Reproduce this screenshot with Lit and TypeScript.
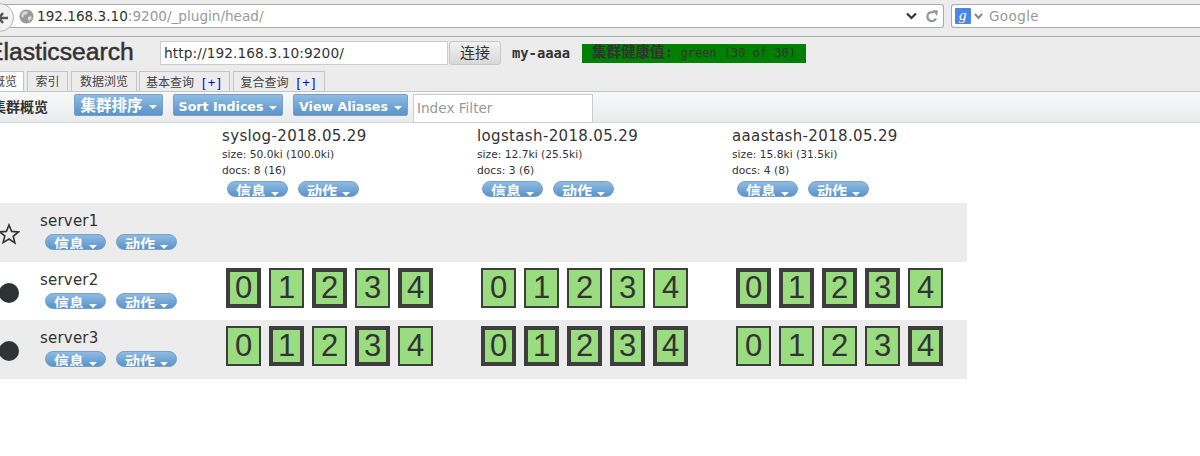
import { LitElement, html, css } from "lit";
import { customElement } from "lit/decorators.js";

const CJK = css`"Liberation Sans", "Noto Sans CJK SC", sans-serif`;
const indices = [
  { name: "syslog-2018.05.29", size: "size: 50.0ki (100.0ki)", docs: "docs: 8 (16)" },
  { name: "logstash-2018.05.29", size: "size: 12.7ki (25.5ki)", docs: "docs: 3 (6)" },
  { name: "aaastash-2018.05.29", size: "size: 15.8ki (31.5ki)", docs: "docs: 4 (8)" },
];
const servers = [
  { name: "server1", star: true, shards: [] as number[][] },
  { name: "server2", star: false, shards: [[1,0,1,0,1],[0,0,0,0,0],[1,1,1,1,0]] },
  { name: "server3", star: false, shards: [[0,1,0,1,0],[1,1,1,1,1],[0,0,0,0,1]] },
];

@customElement("app-root")
export class AppRoot extends LitElement {
  static styles = css`
    :host { display: block; width: 1200px; height: 456px; overflow: hidden; background: #fff; color: #333; font-family: "DejaVu Sans", "Noto Sans CJK SC", sans-serif; }
    .chrome { box-sizing: border-box; background: #ececec; border-bottom: 1px solid #aaa; display: flex; padding-top: 4px; height: 37px; }
    .back { width: 29px; height: 29px; margin: -1px -15px 0 -15px; border: 1px solid #b5b5b5; border-radius: 50%; background: #f2f2f2; flex: none; z-index: 1; box-sizing: border-box; display: flex; align-items: center; justify-content: flex-end; padding-right: 4px; }
    .url { width: 945px; height: 24px; box-sizing: border-box; background: #fff; border: 1px solid #aaa; border-left: 0; border-radius: 0 3px 3px 0; display: flex; align-items: center; padding-left: 20px; gap: 3px; font: 13.6px "DejaVu Sans", sans-serif; color: #999; flex: none; }
    .url b { font-weight: normal; color: #333; }
    .url .grow { flex: 1; white-space: nowrap; }
    .url svg { flex: none; }
    .url .tools { display: flex; align-items: center; gap: 9px; padding-right: 5px; }
    .search { margin-left: 7px; flex: 1; height: 24px; box-sizing: border-box; background: #fff; border: 1px solid #aaa; border-right: 0; border-radius: 3px 0 0 3px; display: flex; align-items: center; padding-left: 3px; gap: 3px; color: #999; font: 13.5px "DejaVu Sans", sans-serif; letter-spacing: .4px; }
    .search span { margin-left: 3px; }
    .g { width: 16px; height: 16px; background: #4a86e8; border-radius: 1px; color: #fff; font: italic 15px/15px "Liberation Serif", serif; text-align: center; }
    .header { height: 54px; background: #ececec; position: relative; display: flex; align-items: flex-start; box-sizing: border-box; padding-top: 4px; }
    .title { width: 160px; margin-left: -13px; flex: none; font: 24.7px/22px "Liberation Sans", sans-serif; -webkit-text-stroke: .5px #333; white-space: nowrap; }
    .conn { margin-left: 13px; width: 288px; height: 24px; box-sizing: border-box; border: 1px solid #ccc; background: #fff; padding: 0 3px; font: 13.7px/22px "DejaVu Sans", sans-serif; color: #333; letter-spacing: .1px; flex: none; }
    .connect { margin-left: 1px; width: 52px; height: 24px; box-sizing: border-box; border: 1px solid #c8c8c8; border-radius: 3px; background: linear-gradient(#f2f2f2, #d8d8d8); text-align: center; font: 15px/22px ${CJK}; flex: none; }
    .cluster { margin-left: 11px; font: bold 13.8px/22px "DejaVu Sans Mono", monospace; width: 70px; padding-top: 1px; flex: none; }
    .health { margin: 3px 0 0 0; width: 224px; height: 19px; background: #008000; color: #333; font: 12px/17px "DejaVu Sans Mono", "Noto Sans CJK SC", monospace; padding-left: 10px; box-sizing: border-box; white-space: nowrap; overflow: hidden; flex: none; }
    .health b { font-size: 14.5px; font-weight: bold; }
    .tabs { position: absolute; left: 0; bottom: 0; display: flex; height: 20px; }
    .tab { height: 20px; box-sizing: border-box; border: 1px solid #c4c4c4; border-bottom: 0; font: 12px/21px ${CJK}; color: #444; text-align: center; white-space: nowrap; margin-right: 3px; background: #ececec; }
    .tab.on { background: #fff; width: 35px; margin-left: -11px; text-align: left; padding-left: 3px; }
    .tab span { color: #00e; margin-left: 8px; font-size: 13px; letter-spacing: 2px; }
    .w41 { width: 41px; }
    .w66 { width: 66px; margin-right: 2px; }
    .w91 { width: 91px; }
    .w92 { width: 92px; }
    .toolbar { height: 32px; box-sizing: border-box; border-top: 1px solid #c4c4c4; border-bottom: 1px solid #d4d8dc; background: linear-gradient(#f8f9f9, #e9ebed); display: flex; position: relative; padding-top: 2px; }
    .tb-label { width: 74px; margin-left: -8px; flex: none; font: bold 14px/26px ${CJK}; color: #333; margin-right: 8px; white-space: nowrap; }
    .btn { height: 22px; box-sizing: border-box; border: 1px solid #7a9fc9; border-radius: 2px; background: linear-gradient(#8ebbe2, #5a94c8); color: #fff; text-align: center; font: bold 12.6px/23px "DejaVu Sans", ${CJK}; margin-right: 10px; white-space: nowrap; flex: none; overflow: hidden; }
    .b89 { width: 89px; font-size: 15.5px; }
    .b110 { width: 110px; }
    .b115 { width: 115px; }
    .btn i, .pill i { display: inline-block; width: 0; height: 0; border: 4px solid transparent; border-top-color: #fff; border-bottom: 0; margin-left: 6px; vertical-align: middle; }
    .filter { margin-left: -5px; width: 180px; height: 29px; box-sizing: border-box; border: 1px solid #ccc; background: #fff; padding-left: 3px; font: 13.6px/26px "DejaVu Sans", sans-serif; color: #999; }
    .grid { width: 967px; display: grid; grid-template-columns: 222px 255px 255px 235px; }
    .head { height: 80px; padding-top: 4px; box-sizing: border-box; }
    .iname { font: 15px/18px "DejaVu Sans", sans-serif; color: #333; letter-spacing: .35px; white-space: nowrap; }
    .meta { font: 10.7px/16px "DejaVu Sans", sans-serif; color: #333; white-space: nowrap; }
    .iname + .meta { margin-top: 2px; }
    .pills { display: flex; gap: 10px; margin: 2px 0 0 5px; }
    .pill { width: 61px; height: 16px; box-sizing: border-box; border: 1px solid #7a9fc9; border-radius: 8px; background: linear-gradient(#8ebbe2, #5a94c8); color: #fff; font: bold 15px/19px ${CJK}; overflow: hidden; text-align: center; white-space: nowrap; }
    .pill i { margin-left: 5px; vertical-align: 1px; }
    .row { display: contents; }
    .cell { height: 58px; box-sizing: border-box; }
    .row.alt .cell { background: #ececec; height: 59px; }
    .srv { display: flex; }
    .mark { width: 40px; flex: none; }
    .dot { width: 20px; height: 20px; background: #2e3436; border-radius: 50%; margin: 21px 0 0 -1px; }
    .star { margin: 20px 0 0 -2px; display: block; }
    .sname { font: 15px/18px "DejaVu Sans", sans-serif; letter-spacing: .2px; padding-top: 9px; color: #333; }
    .srv .pills { margin: 4px 0 0 5px; }
    .shards { display: flex; gap: 8px; padding: 6px 0 0 4px; }
    .shard { width: 35px; height: 40px; box-sizing: border-box; border: 2px solid #3e3e3e; background: #99dd80; font: 31px/35px "Liberation Sans", sans-serif; color: #333; text-align: center; }
    .shard.p { border-width: 4px; line-height: 31px; }
  `;

  pills() {
    return html`<div class="pills"><div class="pill">信息<i></i></div><div class="pill">动作<i></i></div></div>`;
  }

  render() {
    return html`
      <div class="chrome">
        <div class="back"><svg width="10" height="12" viewBox="0 0 10 12"><path d="M0 6h9M4 1 0 6l4 5" fill="none" stroke="#555" stroke-width="2.4"/></svg></div>
        <div class="url">
          <svg width="15" height="15" viewBox="0 0 15 15"><circle cx="7.5" cy="7.5" r="7" fill="#9a9a9a"/><path d="M4 3c2-1 4-1 5 0l-1 2-3 1-1 3-2-2zM9 8l3-1 1 2-3 3-1-1z" fill="#d8d8d8"/></svg>
          <div class="grow"><b>192.168.3.10</b>:9200/_plugin/head/</div>
          <div class="tools">
            <svg width="11" height="8" viewBox="0 0 11 8"><path d="M1 1.5l4.5 4.5L10 1.5" fill="none" stroke="#2e3436" stroke-width="2.2"/></svg>
            <svg width="12" height="13" viewBox="0 0 12 13"><path d="M10 8.5A4.5 4.5 0 1 1 8 2.6" fill="none" stroke="#8a97a3" stroke-width="2.2"/><path d="M6.5 0 12 .5 11 6z" fill="#8a97a3"/></svg>
          </div>
        </div>
        <div class="search">
          <div class="g">g</div>
          <svg width="9" height="7" viewBox="0 0 9 7"><path d="M1 1l3.5 4L8 1" fill="none" stroke="#888" stroke-width="2"/></svg>
          <span>Google</span>
        </div>
      </div>
      <div class="header">
        <div class="title">Elasticsearch</div>
        <div class="conn">http://192.168.3.10:9200/</div>
        <div class="connect">连接</div>
        <div class="cluster">my-aaaa</div>
        <div class="health"><b>集群健康值:</b> green (30 of 30)</div>
        <div class="tabs">
          <div class="tab on">概览</div>
          <div class="tab w41">索引</div>
          <div class="tab w66">数据浏览</div>
          <div class="tab w91">基本查询<span>[+]</span></div>
          <div class="tab w92">复合查询<span>[+]</span></div>
        </div>
      </div>
      <div class="toolbar">
        <div class="tb-label">集群概览</div>
        <div class="btn b89">集群排序<i></i></div>
        <div class="btn b110">Sort Indices<i></i></div>
        <div class="btn b115">View Aliases<i></i></div>
        <div class="filter">Index Filter</div>
      </div>
      <div class="grid">
        <div class="head"></div>
        ${indices.map((i) => html`<div class="head"><div class="iname">${i.name}</div><div class="meta">${i.size}</div><div class="meta">${i.docs}</div>${this.pills()}</div>`)}
        ${servers.map((s, r) => html`
          <div class="row ${r % 2 === 0 ? "alt" : ""}">
            <div class="cell srv">
              <div class="mark">${s.star
                ? html`<svg class="star" width="22" height="22" viewBox="0 0 22 22"><path d="M11 2l2.6 6.4 6.9.5-5.3 4.4 1.7 6.7L11 16l-5.9 3.6 1.7-6.7L1.5 8.9l6.9-.5z" fill="none" stroke="#333" stroke-width="1.6"/></svg>`
                : html`<div class="dot"></div>`}</div>
              <div><div class="sname">${s.name}</div>${this.pills()}</div>
            </div>
            ${[0, 1, 2].map((c) => html`<div class="cell"><div class="shards">${(s.shards[c] || []).map((p, n) => html`<div class="shard ${p ? "p" : ""}">${n}</div>`)}</div></div>`)}
          </div>`)}
      </div>
    `;
  }
}
